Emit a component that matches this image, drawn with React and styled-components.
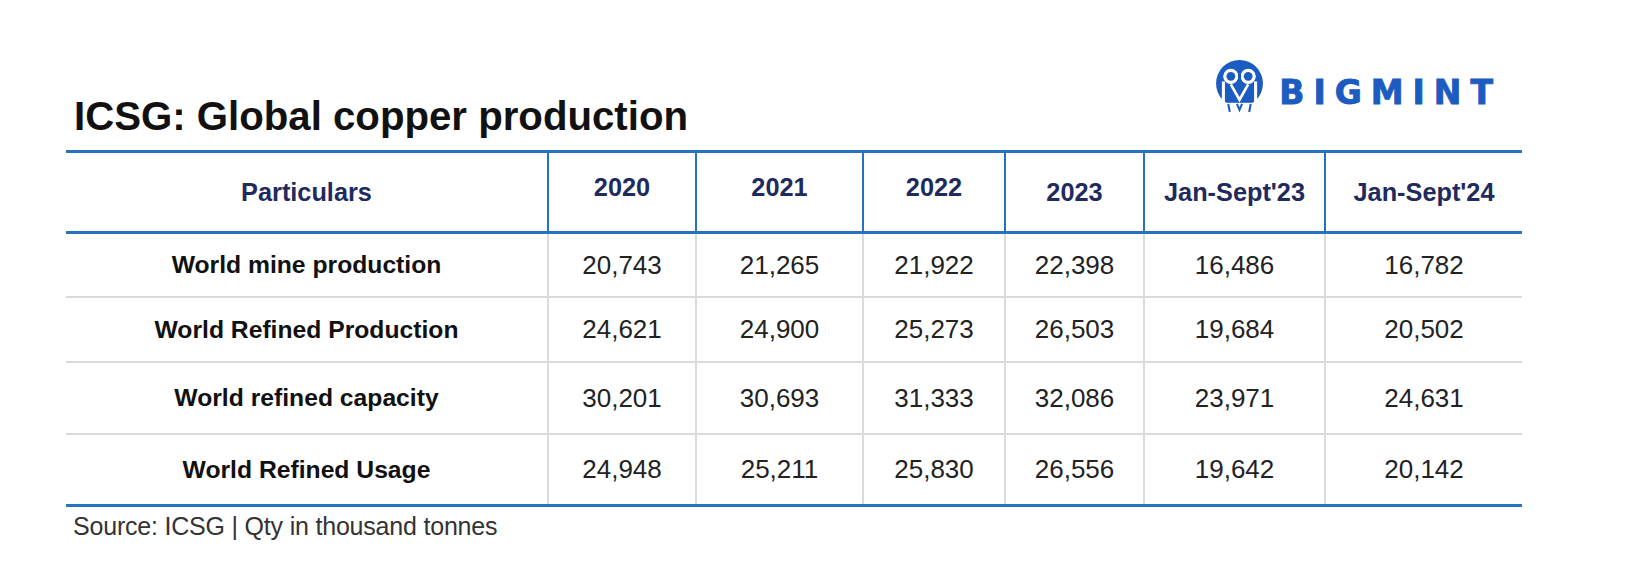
import React from "react";
import styled, { createGlobalStyle } from "styled-components";

const BLUE = "#2873bd";
const GRAY = "#dadada";
const LOGO = "#1c5cc0";

const Global = createGlobalStyle`
  html, body { margin: 0; padding: 0; background: #ffffff; }
  body { font-family: "Liberation Sans", Arial, sans-serif; }
`;

const Page = styled.div`
  width: 1640px;
  height: 573px;
  box-sizing: border-box;
  padding: 60px 0 0 66px;
  background: #ffffff;
`;

const Header = styled.header`
  display: flex;
  justify-content: space-between;
  align-items: flex-start;
  width: 1456px;
  height: 90px;
`;

const Title = styled.h1`
  margin: 34px 0 0 8px;
  font-size: 40.2px;
  line-height: 46px;
  font-weight: 700;
  color: #111111;
`;

const Logo = styled.div`
  display: flex;
  align-items: flex-start;
  gap: 15px;
  margin-right: 29px;
  height: 52px;
`;

const LogoText = styled.span`
  margin-top: 16px;
  font-family: "DejaVu Sans", "Liberation Sans", sans-serif;
  font-weight: 700;
  font-size: 33px;
  line-height: 33px;
  letter-spacing: 9px;
  margin-right: -9px;
  color: ${LOGO};
  -webkit-text-stroke: 0.9px ${LOGO};
`;

const Table = styled.div`
  width: 1456px;
  border-top: 3px solid ${BLUE};
`;

const Row = styled.div`
  display: grid;
  grid-template-columns: 481px 148px 167px 142px 139px 181px 198px;
  box-sizing: border-box;
  height: ${(p) => p.$h}px;
  border-bottom: ${(p) => (p.$strong ? `3px solid ${BLUE}` : `2px solid ${GRAY}`)};
`;

const Cell = styled.div`
  display: flex;
  align-items: center;
  justify-content: center;
  box-sizing: border-box;
  padding-bottom: ${(p) => (p.$lift ? 9 : 0)}px;
  border-left: ${(p) => (p.$first ? "none" : `2px solid ${p.$head ? BLUE : GRAY}`)};
`;

const HeadText = styled.span`
  font-size: 25.3px;
  font-weight: 700;
  color: #1f2a5e;
`;

const Label = styled.span`
  font-size: 24.7px;
  font-weight: 700;
  color: #111111;
`;

const Num = styled.span`
  font-size: 26px;
  font-weight: 400;
  color: #222222;
`;

const Source = styled.p`
  margin: 4px 0 0 0;
  padding-left: 7px;
  font-size: 25px;
  line-height: 30px;
  letter-spacing: -0.2px;
  color: #333333;
`;

const BigmintMark = () => (
  <svg width="49" height="53" viewBox="0 0 48 52" aria-hidden="true">
    <circle cx="24" cy="23" r="23" fill={LOGO} />
    <circle cx="15.5" cy="16" r="7.5" fill="#ffffff" />
    <circle cx="32.5" cy="16" r="7.5" fill="#ffffff" />
    <circle cx="15.5" cy="16" r="4.3" fill={LOGO} />
    <circle cx="32.5" cy="16" r="4.3" fill={LOGO} />
    <path d="M24 6 L24 30" stroke={LOGO} strokeWidth="3" />
    <path d="M8.2 21 L8.2 41" stroke="#ffffff" strokeWidth="3" />
    <path d="M39.8 21 L39.8 41" stroke="#ffffff" strokeWidth="3" />
    <path d="M15.5 24 L24 39 L32.5 24" stroke="#ffffff" strokeWidth="2.6" fill="none" />
    <rect x="0" y="42" width="48" height="10" fill="#ffffff" />
    <path d="M13 43 L14.5 51" stroke={LOGO} strokeWidth="2" />
    <path d="M35 43 L33.5 51" stroke={LOGO} strokeWidth="2" />
    <path d="M21.5 43 L24 49 L26.5 43" stroke={LOGO} strokeWidth="2" fill="none" />
  </svg>
);

const headers = [
  { t: "Particulars" },
  { t: "2020", lift: true },
  { t: "2021", lift: true },
  { t: "2022", lift: true },
  { t: "2023" },
  { t: "Jan-Sept'23" },
  { t: "Jan-Sept'24" },
];

const rows = [
  { label: "World mine production", h: 64, vals: ["20,743", "21,265", "21,922", "22,398", "16,486", "16,782"] },
  { label: "World Refined Production", h: 65, vals: ["24,621", "24,900", "25,273", "26,503", "19,684", "20,502"] },
  { label: "World refined capacity", h: 72, vals: ["30,201", "30,693", "31,333", "32,086", "23,971", "24,631"] },
  { label: "World Refined Usage", h: 72, vals: ["24,948", "25,211", "25,830", "26,556", "19,642", "20,142"] },
];

export default function App() {
  return (
    <>
      <Global />
      <Page>
        <Header>
          <Title>ICSG: Global copper production</Title>
          <Logo>
            <BigmintMark />
            <LogoText>BIGMINT</LogoText>
          </Logo>
        </Header>
        <Table>
          <Row $h={81} $strong>
            {headers.map((c, i) => (
              <Cell key={c.t} $head $first={i === 0} $lift={c.lift}>
                <HeadText>{c.t}</HeadText>
              </Cell>
            ))}
          </Row>
          {rows.map((r, ri) => (
            <Row key={r.label} $h={r.h} $strong={ri === rows.length - 1}>
              <Cell $first>
                <Label>{r.label}</Label>
              </Cell>
              {r.vals.map((v, vi) => (
                <Cell key={vi}>
                  <Num>{v}</Num>
                </Cell>
              ))}
            </Row>
          ))}
        </Table>
        <Source>Source: ICSG | Qty in thousand tonnes</Source>
      </Page>
    </>
  );
}
